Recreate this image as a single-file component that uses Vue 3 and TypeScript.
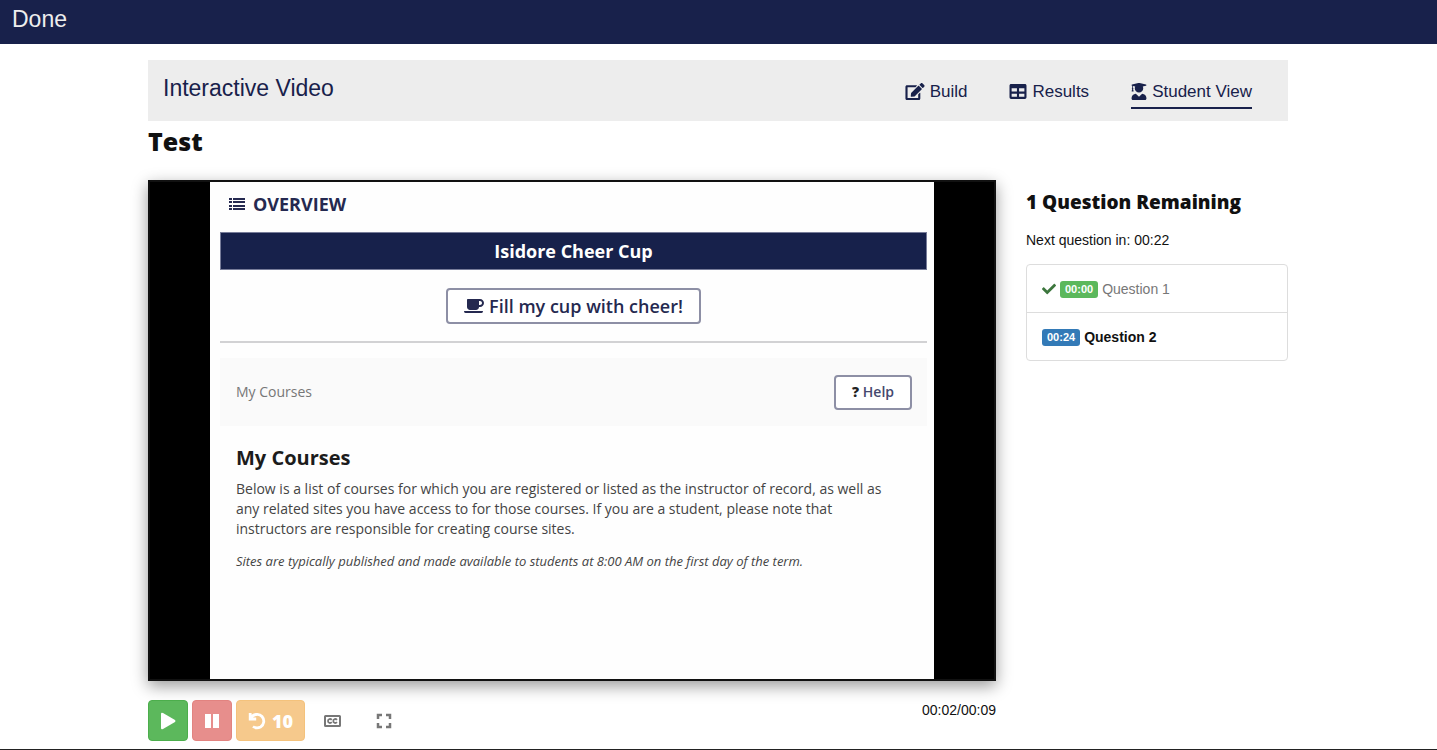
<script setup lang="ts">
import { ref } from 'vue'

interface Tab {
  label: string
  viewBox: string
  width: number
  path: string
}

interface Question {
  time: string
  label: string
  done: boolean
}

const tabs: Tab[] = [
  {
    label: 'Build',
    viewBox: '0 0 576 512',
    width: 20,
    path: 'M402.6 83.2l90.2 90.2c3.8 3.8 3.8 10 0 13.8L274.4 405.6l-92.8 10.3c-12.4 1.4-22.9-9.1-21.5-21.5l10.3-92.8L388.8 83.2c3.8-3.8 10-3.8 13.8 0zm162-22.9l-48.8-48.8c-15.2-15.2-39.9-15.2-55.2 0l-35.4 35.4c-3.8 3.8-3.8 10 0 13.8l90.2 90.2c3.8 3.8 10 3.8 13.8 0l35.4-35.4c15.2-15.3 15.2-40 0-55.2zM384 346.2V448H64V128h229.8c3.2 0 6.2-1.3 8.5-3.5l40-40c7.6-7.6 2.2-20.5-8.5-20.5H48C21.5 64 0 85.5 0 112v352c0 26.5 21.5 48 48 48h352c26.5 0 48-21.5 48-48V306.2c0-10.7-12.9-16-20.5-8.5l-40 40c-2.2 2.3-3.5 5.3-3.5 8.5z',
  },
  {
    label: 'Results',
    viewBox: '0 0 512 512',
    width: 18,
    path: 'M464 32H48C21.5 32 0 53.500 0 80v352c0 26.500 21.500 48 48 48h416c26.500 0 48-21.500 48-48V80c0-26.500-21.500-48-48-48zM224 416H64v-96h160v96zm0-160H64v-96h160v96zm224 160H288v-96h160v96zm0-160H288v-96h160v96z',
  },
  {
    label: 'Student View',
    viewBox: '0 0 448 512',
    width: 16,
    path: 'M319.400 320.600L224 416l-95.400-95.400C57.100 323.700 0 382.200 0 454.400v9.600c0 26.500 21.500 48 48 48h352c26.500 0 48-21.500 48-48v-9.600c0-72.200-57.100-130.700-128.600-133.800zM13.600 79.800l6.400 1.500v58.400c-7 4.200-12 11.500-12 20.300 0 8.400 4.600 15.400 11.100 19.700L3.500 242c-1.700 6.900 2.100 14 7.600 14h41.800c5.500 0 9.300-7.100 7.600-14l-15.600-62.300C51.400 175.400 56 168.400 56 160c0-8.800-5-16.100-12-20.300V87.100l66 15.900c-8.600 17.200-14 36.400-14 57 0 70.700 57.300 128 128 128s128-57.300 128-128c0-20.600-5.300-39.800-14-57l96.300-23.200c18.200-4.400 18.200-27.100 0-31.500l-190.400-46c-13-3.100-26.700-3.100-39.700 0L13.600 48.200c-18.100 4.400-18.100 27.200 0 31.600z',
  },
]

const activeTab = ref('Student View')

const questions: Question[] = [
  { time: '00:00', label: 'Question 1', done: true },
  { time: '00:24', label: 'Question 2', done: false },
]
</script>

<template>
  <div class="page">
    <header class="topbar">
      <a href="#" class="done-link">Done</a>
    </header>

    <main class="container">
      <nav class="toolbar" aria-label="Interactive Video">
        <a href="#" class="brand">Interactive Video</a>
        <div class="tabs">
          <a
            v-for="tab in tabs"
            :key="tab.label"
            href="#"
            class="tab"
            :class="{ active: activeTab === tab.label }"
            @click.prevent="activeTab = tab.label"
          >
            <svg :viewBox="tab.viewBox" :width="tab.width" height="17" aria-hidden="true">
              <path :d="tab.path" />
            </svg>
            <span>{{ tab.label }}</span>
          </a>
        </div>
      </nav>

      <h1 class="title">Test</h1>

      <div class="columns">
        <section class="main-col">
          <div class="player">
            <div class="frame">
              <div class="overview">
                <svg viewBox="0 0 18 14" width="18" height="14" aria-hidden="true">
                  <path d="M1 1h3v2H1zM5 1h12v2H5zM1 4h3v2H1zM5 4h12v2H5zM1 8h3v2H1zM5 8h12v2H5zM1 11h3v2H1zM5 11h12v2H5z" />
                </svg>
                <span>OVERVIEW</span>
              </div>
              <div class="cheer">
                <h2 class="cheer-title">Isidore Cheer Cup</h2>
                <button type="button" class="cheer-btn">
                  <svg viewBox="0 0 640 512" width="20" height="16" aria-hidden="true">
                    <path d="M192 384h192c53 0 96-43 96-96h32c70.600 0 128-57.400 128-128S582.600 32 512 32H120c-13.300 0-24 10.700-24 24v232c0 53 43 96 96 96zM512 96c35.300 0 64 28.700 64 64s-28.700 64-64 64h-32V96h32zm47.700 384H48.300c-47.600 0-61-64-36-64h583.300c25 0 11.800 64-35.900 64z" />
                  </svg>
                  <span>Fill my cup with cheer!</span>
                </button>
              </div>
              <div class="courses-bar">
                <span>My Courses</span>
                <button type="button" class="help-btn"><b>?</b> Help</button>
              </div>
              <div class="courses">
                <h2>My Courses</h2>
                <p>
                  Below is a list of courses for which you are registered or listed as the instructor of record, as well as
                  any related sites you have access to for those courses. If you are a student, please note that
                  instructors are responsible for creating course sites.
                </p>
                <p class="note">
                  Sites are typically published and made available to students at 8:00 AM on the first day of the term.
                </p>
              </div>
            </div>
          </div>

          <div class="controls">
            <button type="button" class="btn play" aria-label="Play">
              <svg viewBox="0 0 16 18" width="16" height="18" aria-hidden="true">
                <path d="M1 2Q1 0 3 1L15 8Q16 9 15 10L3 17Q1 18 1 16Z" />
              </svg>
            </button>
            <button type="button" class="btn pause" aria-label="Pause" disabled>
              <svg viewBox="0 0 16 16" width="16" height="16" aria-hidden="true">
                <path d="M1 1h6v14H1zM9 1h6v14H9z" />
              </svg>
            </button>
            <button type="button" class="btn back" aria-label="Back 10 seconds" disabled>
              <svg viewBox="0 0 18 18" width="18" height="18" aria-hidden="true">
                <path d="M2.200 1v6h6M2.500 6.500C5 2 11 1 14 4.500C17 8 16 13 12.500 15C10 16.300 7 16 5 14.500" fill="none" stroke="#fff" stroke-width="2.800" />
              </svg>
              <span>10</span>
            </button>
            <button type="button" class="icon-btn" aria-label="Captions">
              <svg viewBox="0 0 17 12" width="17" height="12" aria-hidden="true">
                <rect x="1" y="1" width="15" height="10" rx="0.500" stroke-width="2" />
                <path d="M7.800 4.800C6.500 3.500 4 3.800 4 6S6.500 8.500 7.800 7.200M13 4.800C11.700 3.500 9.300 3.800 9.300 6S11.700 8.500 13 7.200" stroke-width="1.800" />
              </svg>
            </button>
            <button type="button" class="icon-btn" aria-label="Full screen">
              <svg viewBox="0 0 16 16" width="16" height="16" aria-hidden="true">
                <path d="M2 6V2h4M10 2h4v4M14 10v4h-4M6 14H2v-4" stroke-width="2.500" />
              </svg>
            </button>
            <span class="clock">00:02/00:09</span>
          </div>
        </section>

        <aside class="side-col">
          <h2 class="remaining">1 Question Remaining</h2>
          <p class="next">Next question in: 00:22</p>
          <ul class="list">
            <li v-for="q in questions" :key="q.label" :class="{ answered: q.done }">
              <svg v-if="q.done" viewBox="0 0 512 512" width="14" height="14" role="img" aria-label="Completed">
                <path d="M173.900 439.400l-166.400-166.400c-10-10-10-26.200 0-36.200l36.200-36.200c10-10 26.200-10 36.200 0L192 312.700 432.100 72.600c10-10 26.200-10 36.200 0l36.200 36.200c10 10 10 26.200 0 36.200l-294.400 294.400c-10 10-26.200 10-36.200 0z" />
              </svg>
              <span class="badge">{{ q.time }}</span>
              <span class="q-label">{{ q.label }}</span>
            </li>
          </ul>
        </aside>
      </div>
    </main>
  </div>
</template>

<style>
body {
  background: #fff;
}
</style>

<style scoped>
* {
  box-sizing: border-box;
}

.page {
  min-height: 100vh;
  border-bottom: 1px solid #222;
  font-family: "Liberation Sans", Arial, sans-serif;
  font-size: 14px;
  line-height: 20px;
  color: #111;
}

h1,
h2,
p,
ul {
  margin: 0;
  padding: 0;
}

button {
  font: inherit;
  cursor: pointer;
}

svg {
  flex: none;
  fill: currentColor;
}

.topbar {
  height: 44px;
  padding: 6px 12px;
  background: #18214b;
}

.done-link {
  font-size: 23px;
  line-height: 26px;
  color: #eee;
  text-decoration: none;
}

.container {
  max-width: 1141px;
  margin: 16px auto 0;
  padding-right: 1px;
}

.toolbar {
  display: flex;
  justify-content: space-between;
  align-items: flex-start;
  padding: 15px 36px 12px 15px;
  background: #ededed;
}

.brand {
  font-size: 23px;
  line-height: 26px;
  color: #18214b;
  text-decoration: none;
}

.tabs {
  display: flex;
  gap: 42px;
}

.tab {
  display: flex;
  align-items: center;
  gap: 5px;
  height: 34px;
  padding-top: 1px;
  border-bottom: 2px solid transparent;
  font-size: 17px;
  color: #18214b;
  text-decoration: none;
}

.tab.active {
  border-bottom-color: #18214b;
}

.title {
  padding-top: 6px;
  font-family: "Open Sans", sans-serif;
  font-size: 25px;
  line-height: 28px;
  font-weight: 800;
}

.columns {
  display: grid;
  grid-template-columns: minmax(0, 848fr) minmax(0, 262fr);
  gap: 30px;
  margin-top: 25px;
}

.player {
  padding: 0 60px;
  border: 2px solid #111;
  background: #000;
  box-shadow: 0 5px 15px rgba(0, 0, 0, 0.4);
}

.frame {
  aspect-ratio: 724 / 497;
  padding: 10px 7px 0 10px;
  overflow: hidden;
  background: #fefefe;
  font-family: "Open Sans", "Noto Sans", sans-serif;
  color: #444;
}

.overview {
  display: flex;
  align-items: center;
  gap: 7px;
  height: 24px;
  padding-left: 8px;
  font-size: 18px;
  font-weight: 700;
  color: #252950;
}

.cheer {
  display: flex;
  flex-direction: column;
  align-items: center;
  margin-top: 16px;
  padding-bottom: 17px;
  border-bottom: 2px solid #d2d2d4;
}

.cheer-title {
  align-self: stretch;
  border: 1px solid #777c99;
  background: #17214b;
  font-size: 18px;
  line-height: 36px;
  font-weight: 700;
  text-align: center;
  color: #fff;
}

.cheer-btn {
  display: flex;
  align-items: center;
  justify-content: center;
  gap: 5px;
  height: 36px;
  margin-top: 18px;
  padding: 0 16px;
  border: 2px solid #8d8fa5;
  border-radius: 4px;
  background: #fff;
  font-size: 18px;
  font-weight: 600;
  color: #252950;
}

.courses-bar {
  display: flex;
  align-items: center;
  justify-content: space-between;
  height: 68px;
  margin-top: 15px;
  padding: 0 15px 0 16px;
  background: #fafafa;
  color: #777;
}

.help-btn {
  height: 35px;
  padding: 0 16px;
  border: 2px solid #8d8fa5;
  border-radius: 4px;
  background: #fff;
  font-weight: 600;
  color: #45486e;
}

.help-btn b {
  font-weight: 800;
  color: #222;
}

.courses {
  padding: 19px 32px 0 16px;
}

.courses h2 {
  font-size: 20px;
  line-height: 26px;
  font-weight: 700;
  color: #1c1c1c;
}

.courses p {
  margin-top: 8px;
}

.courses .note {
  margin-top: 12px;
  font-size: 13px;
  font-style: italic;
}

.controls {
  display: flex;
  align-items: center;
  gap: 4px;
  margin-top: 19px;
}

.btn {
  display: flex;
  align-items: center;
  justify-content: center;
  gap: 6px;
  min-width: 40px;
  height: 41px;
  padding: 0 11px;
  border: 1px solid;
  border-radius: 4px;
  color: #fff;
}

.play {
  border-color: #4cae4c;
  background: #5cb85c;
}

.pause {
  border-color: #e28380;
  background: #e78e8c;
}

.back {
  border-color: #f4c27c;
  background: #f6c98c;
  font-family: "Open Sans", sans-serif;
  font-size: 18px;
  font-weight: 800;
}

.icon-btn {
  display: flex;
  align-items: center;
  justify-content: center;
  width: 47px;
  height: 40px;
  padding: 0;
  border: 0;
  background: none;
  color: #777;
}

.icon-btn svg {
  fill: none;
  stroke: currentColor;
}

.clock {
  align-self: flex-start;
  margin-left: auto;
}

.remaining {
  margin-top: 12px;
  font-family: "Open Sans", sans-serif;
  font-size: 19px;
  line-height: 20px;
  font-weight: 800;
}

.next {
  margin-top: 18px;
}

.list {
  margin-top: 14px;
  border: 1px solid #ddd;
  border-radius: 4px;
  list-style: none;
}

.list li {
  display: flex;
  align-items: center;
  gap: 4px;
  height: 47px;
  padding: 0 15px;
  font-weight: 700;
  color: #111;
}

.list li + li {
  height: 48px;
  border-top: 1px solid #ddd;
}

.list li.answered {
  font-weight: 400;
  color: #777;
}

.list svg {
  color: #3c763d;
}

.badge {
  margin-top: 2px;
  padding: 0 5px;
  border-radius: 3px;
  background: #337ab7;
  font-size: 11px;
  line-height: 17px;
  font-weight: 700;
  color: #fff;
}

.answered .badge {
  background: #5cb85c;
}
</style>
